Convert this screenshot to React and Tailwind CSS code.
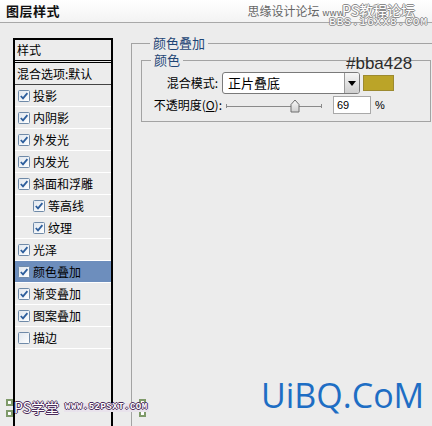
const ROWS = [
  { label: '投影', checked: true },
  { label: '内阴影', checked: true },
  { label: '外发光', checked: true },
  { label: '内发光', checked: true },
  { label: '斜面和浮雕', checked: true },
  { label: '等高线', checked: true, sub: true },
  { label: '纹理', checked: true, sub: true },
  { label: '光泽', checked: true },
  { label: '颜色叠加', checked: true, active: true },
  { label: '渐变叠加', checked: true },
  { label: '图案叠加', checked: true },
  { label: '描边', checked: false },
];

const cjk = { fontFamily: '"Noto Sans CJK SC", "Liberation Sans", sans-serif' };

function CheckBox({ checked }) {
  return (
    <svg width="12" height="12" viewBox="0 0 12 12" className="shrink-0">
      <defs>
        <linearGradient id="cbg" x1="0" y1="0" x2="1" y2="1">
          <stop offset="0" stopColor="#dfe6ee" />
          <stop offset="1" stopColor="#ffffff" />
        </linearGradient>
      </defs>
      <rect x="0.5" y="0.5" width="11" height="11" rx="1" fill="url(#cbg)" stroke="#6f8aa8" />
      {checked && (
        <path d="M2.8 6 L5 8.4 L9.4 3.2" fill="none" stroke="#2d5e9c" strokeWidth="1.8" />
      )}
    </svg>
  );
}

function Corner({ className }) {
  return <span className={`absolute h-[7px] w-[7px] border-2 border-[#7f9a6a] bg-white ${className}`} />;
}

export default function App() {
  return (
    <div className="relative h-[426px] w-[432px] overflow-hidden bg-[#ececec] text-[12px] text-black" style={cjk}>

      {/* title bar */}
      <div className="relative flex h-[23px] items-center justify-between border-b border-[#a8a8a8] bg-gradient-to-b from-white to-[#f3f3f3] px-[6px]">
        <span className="text-[13px] font-bold tracking-[0.5px] text-[#111]">图层样式</span>
        <span className="mr-[80px] whitespace-nowrap text-[12px] text-[#666]">
          思缘设计论坛 <span className="text-[9px]">www.</span>
        </span>
        <div className="absolute right-[4px] top-[3px] flex flex-col items-center leading-none text-white [text-shadow:1px_0_#8c8c8c,-1px_0_#8c8c8c,0_1px_#8c8c8c,0_-1px_#8c8c8c]">
          <span className="whitespace-nowrap text-[14px]">PS教程论坛</span>
          <span className="whitespace-nowrap text-[11px] tracking-[1px]" style={{ fontFamily: '"Liberation Mono", monospace' }}>BBS.16XX8.COM</span>
        </div>
      </div>

      <div className="flex">
        {/* style list */}
        <div className="pl-[13px] pt-[15px]">
          <div className="h-[400px] w-[100px] border-x-2 border-t-2 border-black">
            <div className="flex h-[23px] items-center border-b-[3px] border-double border-black px-[2px]">样式</div>
            <div className="flex h-[22px] items-center border-b border-[#444] px-[2px]">混合选项:默认</div>
            {ROWS.map((r) => (
              <div
                key={r.label}
                className={`flex h-[22px] items-center gap-[3px] border-b border-white ${r.sub ? 'pl-[18px]' : 'pl-[3px]'} ${r.active ? 'bg-[#6d8ebd]' : ''}`}
              >
                <CheckBox checked={r.checked} />
                <span>{r.label}</span>
              </div>
            ))}
          </div>
        </div>

        {/* settings */}
        <div className="ml-[18px] mt-[12px] flex-1">
          <fieldset className="-mr-[20px] h-[420px] border border-r-0 border-[#a3a3a3] pl-[9px] pr-[21px] pt-[1px]">
            <legend className="ml-[9px] px-[3px] text-[13px] leading-[16px] text-[#1f4676]">颜色叠加</legend>
            <fieldset className="w-[290px] border border-[#a3a3a3] pb-[7px] pt-[4px]">
              <legend className="ml-[9px] px-[3px] text-[13px] leading-[16px] text-[#1f4676]">颜色</legend>

              <div className="flex items-center">
                <span className="w-[76px] text-right">混合模式:</span>
                <div className="ml-[4px] flex h-[22px] w-[138px] items-stretch rounded-[3px] border border-[#7a7a7a] bg-white">
                  <span className="flex flex-1 items-center pl-[5px] text-[13px]">正片叠底</span>
                  <span className="flex w-[15px] items-center justify-center rounded-r-[2px] border-l border-[#9a9a9a] bg-gradient-to-b from-[#f6f6f6] to-[#cfcfcf]">
                    <span className="h-0 w-0 border-x-[4px] border-t-[5px] border-x-transparent border-t-black" />
                  </span>
                </div>
                <span className="ml-[3px] h-[16px] w-[31px] border border-[#9c8a30] bg-[#bba428]" />
              </div>

              <div className="mt-[2px] flex items-center">
                <span className="w-[80px] text-right">
                  不透明度(<span className="underline">O</span>):
                </span>
                <div className="relative ml-[4px] h-[18px] w-[96px]">
                  <span className="absolute left-0 right-0 top-[10px] h-px bg-[#8a8a8a]" />
                  <span className="absolute left-0 top-[8px] h-[4px] w-px bg-[#8a8a8a]" />
                  <span className="absolute right-0 top-[8px] h-[4px] w-px bg-[#8a8a8a]" />
                  <svg width="10" height="14" viewBox="0 0 10 14" className="absolute left-[64px] top-[3px]">
                    <defs>
                      <linearGradient id="thumb" x1="0" y1="0" x2="0" y2="1">
                        <stop offset="0" stopColor="#fafafa" />
                        <stop offset="1" stopColor="#cfcfcf" />
                      </linearGradient>
                    </defs>
                    <path d="M1 5.5 L5 1 L9 5.5 V13 H1 Z" fill="url(#thumb)" stroke="#6e6e6e" />
                  </svg>
                </div>
                <span className="ml-[11px] flex h-[18px] w-[38px] items-center border border-[#a9a9a9] bg-white pl-[3px] text-[11px]" style={{ fontFamily: '"Liberation Sans", sans-serif' }}>69</span>
                <span className="ml-[4px] text-[11px]" style={{ fontFamily: '"Liberation Sans", sans-serif' }}>%</span>
              </div>
            </fieldset>
          </fieldset>
        </div>
      </div>

      {/* annotation */}
      <span className="absolute left-[346px] top-[55px] text-[17px] leading-none text-[#2b2b2b]" style={{ fontFamily: '"Liberation Sans", sans-serif' }}>#bba428</span>

      {/* watermarks */}
      <div className="absolute left-[6px] top-[399px] h-[18px] w-[140px]">
        <Corner className="left-0 top-0" />
        <Corner className="left-0 bottom-0" />
        <Corner className="right-0 top-0" />
        <Corner className="right-0 bottom-0" />
        <div className="absolute left-[8px] top-[1px] flex items-center gap-[5px] whitespace-nowrap leading-none text-white [text-shadow:1px_0_#4a2b5a,-1px_0_#4a2b5a,0_1px_#4a2b5a,0_-1px_#4a2b5a]">
          <span className="text-[14px]">PS学堂</span>
          <span className="bg-[#e9e3ec] px-[1px] text-[9px] font-bold tracking-[0.5px]" style={{ fontFamily: '"Liberation Mono", monospace' }}>WWW.52PSXT.COM</span>
        </div>
      </div>
      <span className="absolute left-[261px] top-[378px] text-[34px] leading-none text-[#1e6ec4]" style={{ fontFamily: '"Open Sans", sans-serif' }}>UiBQ.CoM</span>
    </div>
  );
}
